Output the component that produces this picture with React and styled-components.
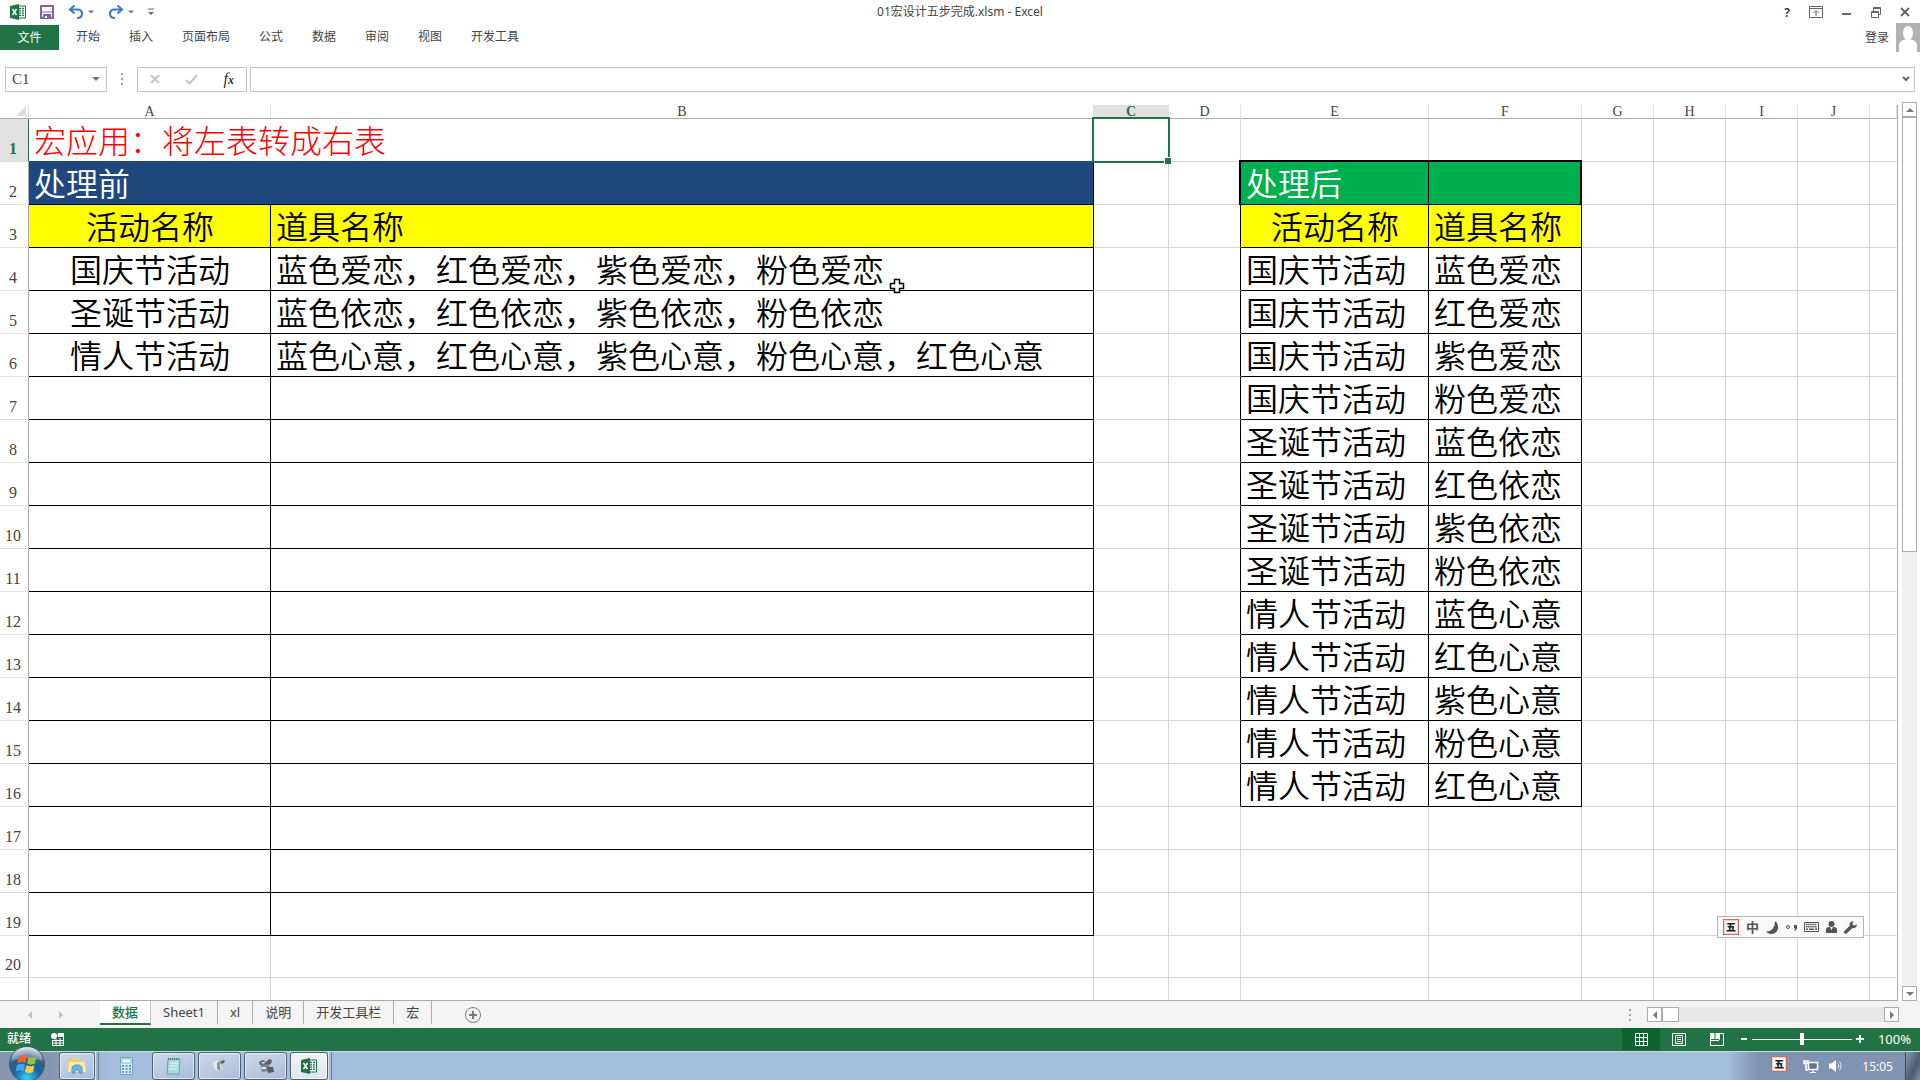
import { useState } from "react";
import styled, { createGlobalStyle } from "styled-components";

const UI_FONT = '"Noto Sans", "Noto Sans CJK SC", sans-serif';
const CELL_FONT = '"Noto Sans CJK SC", sans-serif';
const GREEN = "#217346";

const GlobalStyle = createGlobalStyle`
    * {
        box-sizing: border-box;
    }

    body {
        margin: 0;
        background-color: #FFF;
        color: #444;
        font-family: ${UI_FONT};
        font-size: 12px;
        overflow: hidden;
    }

    button, input {
        font: inherit;
        color: inherit;
        border: none;
        background: none;
        padding: 0;
        margin: 0;
    }

    svg {
        display: block;
    }
`

const Window = styled.div`
    display: flex;
    flex-direction: column;
    height: 100vh;
`

/* title bar */

const TitleBar = styled.header`
    display: grid;
    grid-template-columns: 1fr auto 1fr;
    align-items: center;
    height: 24px;
    padding: 0 10px;
`

const Tools = styled.div`
    display: flex;
    align-items: center;
    justify-content: ${({$end}) => $end ? "flex-end" : "flex-start"};
    gap: ${({$gap}) => $gap};
`

const IconButton = styled.button`
    display: flex;
    align-items: center;
    gap: 4px;
`

const DocTitle = styled.h1`
    margin: 0;
    font-size: 12px;
    font-weight: normal;
    line-height: 16px;
`

/* ribbon */

const Ribbon = styled.nav`
    display: flex;
    align-items: center;
    height: 26px;
    gap: 29px;
`

const FileTab = styled.button`
    width: 59px;
    height: 25px;
    margin-right: -12px;
    background-color: ${GREEN};
    color: #FFF;
`

const RibbonTab = styled.button`
    line-height: 24px;
`

const Login = styled.button`
    display: flex;
    align-items: center;
    gap: 7px;
    margin-left: auto;
`

/* formula bar */

const FormulaBar = styled.div`
    display: flex;
    align-items: center;
    height: 54px;
    padding: 4px 5px 0;
`

const NameBox = styled.label`
    display: flex;
    align-items: center;
    width: 102px;
    height: 25px;
    padding: 0 6px;
    border: 1px solid #C6C6C6;

    input {
        flex: 1;
        min-width: 0;
        font-family: "Liberation Serif", serif;
        font-size: 15px;
    }
`

const Grip = styled.span`
    display: flex;
    flex-direction: column;
    align-items: center;
    gap: 3px;
    width: ${({$width}) => $width};

    i {
        width: 2px;
        height: 2px;
        background-color: #A0A0A0;
    }
`

const FormulaTools = styled.div`
    display: flex;
    align-items: center;
    justify-content: space-between;
    width: 110px;
    height: 25px;
    padding: 0 12px;
    border: 1px solid #C6C6C6;
    margin-right: 3px;
`

const FxButton = styled.button`
    font-family: "Liberation Serif", serif;
    font-size: 16px;
    font-style: italic;
    line-height: 20px;
    color: #333;

    sub {
        font-size: 12px;
        font-weight: bold;
        vertical-align: baseline;
    }
`

const FormulaField = styled.label`
    display: flex;
    align-items: center;
    flex: 1;
    height: 25px;
    padding: 0 4px;
    border: 1px solid #C6C6C6;

    input {
        flex: 1;
    }
`

/* sheet */

const Workspace = styled.main`
    display: flex;
    flex: 1;
    min-height: 0;
    padding-top: 1px;
`

const SheetView = styled.div`
    flex: 1;
    min-width: 0;
    overflow: hidden;
    border-right: 1px solid #ABABAB;
    border-bottom: 1px solid #ABABAB;
`

const Sheet = styled.table`
    width: 100%;
    table-layout: fixed;
    border-collapse: separate;
    border-spacing: 0;
`

const ColHead = styled.th`
    height: 14px;
    padding: 0;
    border-right: 1px solid #E1E1E1;
    border-bottom: 1px solid ${({$active}) => $active ? GREEN : "#ABABAB"};
    background-color: ${({$active}) => $active ? "#E1E1E1" : "#FFF"};
    color: ${({$active}) => $active ? GREEN : "#444"};
    font-family: "Liberation Serif", serif;
    font-size: 14px;
    font-weight: ${({$active}) => $active ? "bold" : "normal"};
    line-height: 13px;
    vertical-align: bottom;
`

const Corner = styled(ColHead)`
    svg {
        margin-left: auto;
    }
`

const RowHead = styled.th`
    padding: 0 2px 3px 0;
    border-right: 1px solid ${({$active}) => $active ? GREEN : "#ABABAB"};
    border-bottom: 1px solid #E1E1E1;
    background-color: ${({$active}) => $active ? "#E1E1E1" : "#FFF"};
    color: ${({$active}) => $active ? GREEN : "#444"};
    font-family: "Liberation Serif", serif;
    font-size: 16px;
    font-weight: ${({$active}) => $active ? "bold" : "normal"};
    line-height: 18px;
    vertical-align: bottom;
`

const fills = {
    title: "background-color: #FFF; color: #F00; font-weight: 300;",
    navy: "background-color: #1F497D; color: #FFF;",
    green: "background-color: #00B050; color: #FFF;",
    yellow: "background-color: #FF0; color: #000;",
    plain: "color: #000;"
}

const Cell = styled.td`
    position: relative;
    height: ${({$height}) => $height}px;
    padding: 0 4px 2px 5px;
    border-right: 1px solid ${({$right}) => $right};
    border-bottom: 1px solid ${({$bottom}) => $bottom};
    font-family: ${CELL_FONT};
    font-size: 32px;
    font-weight: 350;
    line-height: 40px;
    text-align: ${({$center}) => $center ? "center" : "left"};
    white-space: nowrap;
    ${({$fill}) => fills[$fill]}
`

const Selection = styled.div`
    position: absolute;
    inset: -2px;
    border: 2px solid ${GREEN};
    z-index: 1;

    &::after {
        content: "";
        position: absolute;
        right: -3px;
        bottom: -3px;
        width: 6px;
        height: 6px;
        background-color: ${GREEN};
        border: 1px solid #FFF;
        border-width: 1px 0 0 1px;
    }
`

const ThickEdge = styled.span`
    position: absolute;
    inset: -2px -1px -1px -2px;
    border-top: 2px solid #000;
    border-${({$side}) => $side}: 2px solid #000;
`

const Pointer = styled.svg`
    position: absolute;
    left: 618px;
    bottom: -4px;
    z-index: 1;
`

/* scroll bars */

const VScroll = styled.div`
    display: flex;
    flex-direction: column;
    width: 15px;
    margin: -3px 3px 0 4px;
`

const HScroll = styled.div`
    display: flex;
    width: 252px;
    height: 15px;
    margin-right: 21px;
`

const ArrowButton = styled.button`
    display: flex;
    align-items: center;
    justify-content: center;
    width: 15px;
    height: 15px;
    border: 1px solid #ABABAB;
    background-color: #FFF;
    flex-shrink: 0;
`

const Track = styled.div`
    flex: 1;
    display: flex;
    flex-direction: ${({$vertical}) => $vertical ? "column" : "row"};
    background-color: ${({$vertical}) => $vertical ? "#F0F0F0" : "#E8E8E8"};
`

const Thumb = styled.div`
    flex-basis: ${({$size}) => $size};
    border: 1px solid #ABABAB;
    background-color: #FFF;
`

/* sheet tabs */

const TabBar = styled.div`
    display: flex;
    align-items: center;
    height: 27px;
    background-color: #F4F4F4;
`

const TabArrows = styled.div`
    display: flex;
    align-items: center;
    gap: 23px;
    width: 100px;
    padding-left: 26px;
`

const SheetTab = styled.button`
    align-self: flex-start;
    height: 24px;
    padding: 0 12px;
    font-size: 13px;
    line-height: 22px;
    color: ${({$active}) => $active ? GREEN : "#444"};
    background-color: ${({$active}) => $active ? "#FFF" : "transparent"};
    border-bottom: 2px solid ${({$active}) => $active ? GREEN : "transparent"};
    border-right: 1px solid ${({$active}) => $active ? "#C6C6C6" : "#ABABAB"};
    font-weight: ${({$active}) => $active ? "500" : "normal"};
`

const AddTab = styled.button`
    margin-left: 33px;
`

const Push = styled.div`
    margin-left: auto;
`

/* status bar */

const StatusBar = styled.footer`
    display: flex;
    align-items: center;
    height: 23px;
    padding: 0 9px 1px 7px;
    background-color: ${GREEN};
    color: #FFF;
    line-height: 16px;
`

const StatusText = styled.span`
    font-weight: 500;
    margin-right: 20px;
`

const ViewButton = styled.button`
    display: flex;
    align-items: center;
    justify-content: center;
    width: 38px;
    height: 22px;
    background-color: ${({$active}) => $active ? "#0F6331" : "transparent"};
`

const Zoom = styled.div`
    display: flex;
    align-items: center;
    gap: 4px;
    margin-left: 4px;

    input {
        appearance: none;
        width: 100px;
        height: 12px;
        background: linear-gradient(#FFF, #FFF) center / 100% 1px no-repeat;
    }

    input::-webkit-slider-thumb {
        appearance: none;
        width: 4px;
        height: 12px;
        background-color: #FFF;
    }
`

const ZoomValue = styled.button`
    width: 47px;
    font-size: 13px;
    text-align: right;
`

/* task bar */

const TaskBar = styled.div`
    display: flex;
    align-items: stretch;
    height: 29px;
    background: linear-gradient(90deg, #8496B0 0, #8496B0 50px, #A6BEDD 110px, #A6BEDD calc(100% - 192px), #8094B1 calc(100% - 162px));
    border-top: 1px solid #C9D6E6;
`

const StartButton = styled.button`
    position: relative;
    width: 59px;

    svg {
        position: absolute;
        left: 8px;
        bottom: -3px;
    }
`

const TaskButton = styled.button`
    display: flex;
    align-items: center;
    justify-content: center;
    width: ${({$width}) => $width};
    margin-right: 3px;
    border: 1px solid ${({$flat}) => $flat ? "transparent" : "#4F5E74"};
    border-radius: 3px;
    box-shadow: ${({$flat}) => $flat ? "none" : "inset 0 0 0 1px rgba(255, 255, 255, 0.6)"};
    background: ${({$flat, $active}) => $flat ? "none" : $active
        ? "linear-gradient(#EEF3F9, #DCE6F1)"
        : "linear-gradient(160deg, #CDD9EA, #A9BCD8)"};
`

const StackEdge = styled.span`
    width: 4px;
    margin-left: -3px;
    margin-right: ${({$after}) => $after};
    border-right: 1px solid #6C7D96;
    border-left: 1px solid #DCE6F1;
`

const Tray = styled.div`
    display: flex;
    align-items: center;
    margin-left: auto;
    color: #FFF;
`

const Clock = styled.time`
    margin: 0 12px 0 20px;
    font-size: 12px;
`

const ShowDesktop = styled.button`
    align-self: stretch;
    width: 15px;
    border-left: 1px solid #3C4A5E;
    background: linear-gradient(115deg, #8A9BB2, #4B5B70 60%, #8091A8);
`

/* input method bar */

const ImeBar = styled.div`
    position: fixed;
    right: 56px;
    bottom: 142px;
    display: flex;
    align-items: center;
    justify-content: space-between;
    width: 147px;
    height: 22px;
    padding: 0 6px 0 5px;
    border: 1px solid #B5B5B5;
    background-color: #FAFAFA;
    color: #555;
    z-index: 2;
`

const ImeMode = styled.button`
    font-size: 13px;
    font-weight: bold;
    line-height: 16px;
`

const Wubi = styled.button`
    width: 16px;
    height: 16px;
    border: 1px solid #D06A60;
    outline: 1px solid #F3D0CC;
    outline-offset: -2px;
    background-color: #FFF;
    color: #222;
    font-size: 10px;
    font-weight: 900;
    line-height: 12px;
`

const TrayWubi = styled(Wubi)`
    margin-right: 7px;
    margin-bottom: 4px;
`

function Triangle({dir = "down", size = 4, color = "#777"}){
    const turn = {down: 0, left: 90, up: 180, right: 270}[dir]
    return(
        <svg width={size * 2} height={size * 2} viewBox="0 0 8 8">
            <path d="M0 2h8L4 6z" fill={color} transform={`rotate(${turn} 4 4)`}/>
        </svg>
    )
}

function ExcelIcon({size = 16}){
    return(
        <svg width={size} height={size} viewBox="0 0 16 16">
            <path d="M8 2h7.5v12H8z" fill="#FFF" stroke="#217346"/>
            <path d="M9 4.5h2M12 4.5h2M9 6.8h2M12 6.8h2M9 9.1h2M12 9.1h2M9 11.4h2M12 11.4h2" stroke="#217346" strokeWidth="1.3"/>
            <path d="M0 2l9-2v16l-9-2z" fill="#217346"/>
            <path d="M2.5 5l4 6M6.5 5l-4 6" stroke="#FFF" strokeWidth="1.5"/>
        </svg>
    )
}

function SaveIcon(){
    return(
        <svg width="14" height="14" viewBox="0 0 14 14">
            <path d="M1 1h12v12H1z" fill="#FFF" stroke="#8660A8" strokeWidth="2"/>
            <path d="M1 7h12" stroke="#8660A8"/>
            <path d="M3 9h8v4H3z" fill="#8660A8"/>
            <path d="M5 11h2v2H5z" fill="#FFF"/>
        </svg>
    )
}

function UndoIcon({flip}){
    return(
        <svg width="16" height="16" viewBox="0 0 16 16">
            <g transform={flip ? "matrix(-1 0 0 1 16 0)" : undefined} fill="none" stroke="#3E7DBB" strokeWidth="2.2">
                <path d="M6.500 1.500L2 5.500l4.500 4"/>
                <path d="M2.500 5.500H9c3 0 5 1.500 5 4.200 0 2.600-2 4.300-5 4.300"/>
            </g>
        </svg>
    )
}

function CustomizeIcon(){
    return(
        <svg width="6" height="8" viewBox="0 0 6 8">
            <path d="M0 1h6" stroke="#666"/>
            <path d="M0 4h6L3 7z" fill="#666"/>
        </svg>
    )
}

function RibbonIcon(){
    return(
        <svg width="14" height="12" viewBox="0 0 14 12" fill="none" stroke="#666">
            <path d="M.5.5h13v11H.5zM.5 2.500h13M7 10V5M4.500 7L7 4.500 9.500 7"/>
        </svg>
    )
}

function MinimizeIcon(){
    return(
        <svg width="10" height="12" viewBox="0 0 10 12">
            <path d="M0 8h9" stroke="#666" strokeWidth="2"/>
        </svg>
    )
}

function RestoreIcon(){
    return(
        <svg width="10" height="11" viewBox="0 0 10 11" fill="none" stroke="#666">
            <path d="M.5 4.500h7v6h-7zM.5 5.500h7M2.500 4V.5h7v7H8M2.500 1.500h7"/>
        </svg>
    )
}

function CloseIcon({color = "#666", size = 10}){
    return(
        <svg width={size} height={size} viewBox="0 0 10 10">
            <path d="M1 1l8 8M9 1L1 9" stroke={color} strokeWidth="2"/>
        </svg>
    )
}

function CheckIcon(){
    return(
        <svg width="13" height="11" viewBox="0 0 13 11">
            <path d="M1 6l3.500 3.500L12 1" fill="none" stroke="#C4C4C4" strokeWidth="2"/>
        </svg>
    )
}

function AvatarIcon(){
    return(
        <svg width="24" height="29" viewBox="0 0 24 29">
            <path d="M0 0h24v29H0z" fill="#B2B2B2"/>
            <ellipse cx="12" cy="10" rx="5" ry="7" fill="#FFF"/>
            <path d="M3 29v-7c0-3 3-5 6-5.500h6c3 .5 6 2.500 6 5.500v7z" fill="#FFF"/>
        </svg>
    )
}

function MacroIcon(){
    return(
        <svg width="13" height="13" viewBox="0 0 13 13" fill="none" stroke="#FFF">
            <circle cx="3" cy="3" r="3" fill="#FFF" stroke="none"/>
            <path d="M7 .5h5.500v3H7z" fill="#FFF"/>
            <path d="M1.500 7v5.500h11V4M1.500 7.500h11M1.500 10h11M5 6v6M9 5v7"/>
        </svg>
    )
}

function GridIcon(){
    return(
        <svg width="13" height="13" viewBox="0 0 13 13" fill="none" stroke="#FFF">
            <path d="M.5.5h12v12H.5zM4.500 0v13M8.500 0v13M0 4.500h13M0 8.500h13"/>
        </svg>
    )
}

function PageIcon(){
    return(
        <svg width="14" height="13" viewBox="0 0 14 13" fill="none" stroke="#FFF">
            <path d="M.5.5h13v12H.5zM3.500 2.500h7v8h-7zM5 4.500h4M5 6.500h4M5 8.500h4"/>
        </svg>
    )
}

function BreakIcon(){
    return(
        <svg width="14" height="13" viewBox="0 0 14 13" fill="none" stroke="#FFF">
            <path d="M.5 0v12.500h13V.5H10M9.500 0v7M0 7.500h9"/>
            <path d="M1 0h3.500v6H1zM5.500 0H9v6H5.500z" fill="#FFF" stroke="none"/>
        </svg>
    )
}

function SignIcon({plus}){
    return(
        <svg width="8" height="8" viewBox="0 0 8 8" stroke="#FFF" strokeWidth="2">
            <path d={plus ? "M0 4h8M4 0v8" : "M1 4h6"}/>
        </svg>
    )
}

function AddIcon(){
    return(
        <svg width="16" height="16" viewBox="0 0 16 16" fill="none" stroke="#777">
            <circle cx="8" cy="8" r="7.500"/>
            <path d="M4 8h8M8 4v8" strokeWidth="2"/>
        </svg>
    )
}

function WindowsOrb(){
    return(
        <svg width="38" height="38" viewBox="0 0 38 38">
            <defs>
                <radialGradient id="orb" cx="50%" cy="90%" r="85%">
                    <stop offset="0" stopColor="#35D3F5"/>
                    <stop offset=".45" stopColor="#14649F"/>
                    <stop offset=".75" stopColor="#3A5D85"/>
                    <stop offset="1" stopColor="#C5D3E2"/>
                </radialGradient>
            </defs>
            <circle cx="19" cy="19" r="17.500" fill="url(#orb)" stroke="#42566F"/>
            <path d="M4 16a15 14 0 0 1 30 0c-9-4-21-4-30 0z" fill="#FFF" opacity=".3"/>
            <path d="M11 12c3-2 5-2 8-.5L17.500 18c-3-1.500-5-1.300-8 .3z" fill="#F0602B"/>
            <path d="M20.500 12c3 1.500 5 1.500 8-.3L27 18.500c-3 1.500-5 1.500-8 0z" fill="#8DC63F"/>
            <path d="M9 20c3-1.600 5-1.600 8-.2l-1.500 6.500c-3-1.500-5-1.300-8 .3z" fill="#3FA9F5"/>
            <path d="M18.500 20.200c3 1.500 5 1.500 8 0L25 27c-3 1.500-5 1.300-8-.3z" fill="#FFCB2E"/>
        </svg>
    )
}

function FolderIcon(){
    return(
        <svg width="20" height="18" viewBox="0 0 20 18">
            <path d="M1 3l2-2h5l2 2h7v12H1z" fill="#E8CF74"/>
            <path d="M2 5h16l1 10H1z" fill="#F7E9A6"/>
            <path d="M5 16v-4c0-3 2-4 5-4s5 1 5 4v4h-3v-3H8v3z" fill="#6DB8E8" stroke="#4B95C9"/>
        </svg>
    )
}

function CalcIcon(){
    return(
        <svg width="13" height="18" viewBox="0 0 13 18">
            <path d="M.5.5h12v17H.5z" fill="#D8ECF8" stroke="#6FA3C7"/>
            <path d="M2 2h9v4H2z" fill="#FFF" stroke="#8AB7D6"/>
            <path d="M2 9h9M2 12h9M2 15h9" stroke="#5F9CC5" strokeWidth="2" strokeDasharray="2 1.500"/>
        </svg>
    )
}

function NotepadIcon(){
    return(
        <svg width="15" height="18" viewBox="0 0 15 18">
            <path d="M2 2h12l-1 15H1z" fill="#A9DAE2" stroke="#6DA4B0"/>
            <path d="M2 2h12" stroke="#56717A" strokeWidth="2" strokeDasharray="1 1"/>
            <path d="M4 6h8M4 9h8M3 12h8" stroke="#E6F7FA"/>
        </svg>
    )
}

function CameraIcon(){
    return(
        <svg width="16" height="16" viewBox="0 0 16 16">
            <path d="M1 4l6-1 2 2-1 8-5-1z" fill="#E8EBEF"/>
            <path d="M5 5l3-2v10l-3-2z" fill="#8A919B"/>
            <path d="M8 4c2-2 4-2 5-1l-1 2-3 1z" fill="#5C636D"/>
            <path d="M9 8l3 0 1 3-3 1z" fill="#C9CED5"/>
        </svg>
    )
}

function RecorderIcon(){
    return(
        <svg width="18" height="16" viewBox="0 0 18 16">
            <path d="M2 4l4-2 3 2 3-3 3 1-1 4-5 2-6-1z" fill="#5D636B"/>
            <path d="M4 7l8-1 1 7-8 1z" fill="#7D838B"/>
            <path d="M10 9l6 0 1 5-6 1z" fill="#575D65"/>
            <path d="M5 4l3 0 0 1-3 1zM5 9l4 0 0 2-4 0z" fill="#E1E5EA"/>
        </svg>
    )
}

function NetworkIcon(){
    return(
        <svg width="16" height="15" viewBox="0 0 16 15" fill="none" stroke="#FFF">
            <path d="M5.500 3.500h9v7h-9z" fill="#5F748F" strokeWidth="1.500"/>
            <path d="M10 11v2M7 13.500h6"/>
            <path d="M1 1v3.500h4V1M3 1v3M3 5v6h2" strokeWidth="1.500"/>
        </svg>
    )
}

function SpeakerIcon(){
    return(
        <svg width="14" height="14" viewBox="0 0 14 14">
            <path d="M1 4.500h2.500L8 1v12L3.500 9.500H1z" fill="#FFF"/>
            <path d="M10 4.500c1 1.500 1 3.500 0 5M11.500 2.500c2 3 2 6 0 9" fill="none" stroke="#DCE4EE"/>
        </svg>
    )
}

function MoonIcon(){
    return(
        <svg width="13" height="13" viewBox="0 0 13 13">
            <path d="M9 0c5 4 4 12-3.500 13C3 13 1 12 0 10.500 5 11 9 7 9 0z" fill="#555"/>
        </svg>
    )
}

function PunctIcon(){
    return(
        <svg width="11" height="9" viewBox="0 0 11 9">
            <circle cx="2" cy="4" r="1.500" fill="none" stroke="#555"/>
            <path d="M8 2h3v2.500C11 6.500 9.500 8 8 8.500 8.800 7.500 9 6.500 9 5H8z" fill="#555"/>
        </svg>
    )
}

function KeyboardIcon(){
    return(
        <svg width="15" height="10" viewBox="0 0 15 10">
            <path d="M.5.5h14v9H.5z" fill="#FFF" stroke="#555"/>
            <path d="M2 2.500h11M2 4.800h11" stroke="#555" strokeDasharray="1.500 .6" strokeWidth="1.400"/>
            <path d="M2 7.300h2M5 7.300h5M11 7.300h2" stroke="#555" strokeWidth="1.400"/>
        </svg>
    )
}

function PersonIcon(){
    return(
        <svg width="11" height="12" viewBox="0 0 11 12" fill="#555">
            <circle cx="5.500" cy="3" r="3"/>
            <path d="M0 12V8.500C0 6.500 2 6 4 6l1.500 3L7 6c2 0 4 .5 4 2.500V12z"/>
        </svg>
    )
}

function WrenchIcon(){
    return(
        <svg width="13" height="13" viewBox="0 0 13 13">
            <path d="M12.800 3.200l-2.600 1.600-2-2L9.800.2C7 -.3 5 2 5.700 4.700L.4 10c-.7.700-.5 1.700.1 2.300.7.700 1.700.7 2.400 0l5.300-5.100c2.900.5 5-1.400 4.600-4z" fill="#555"/>
        </svg>
    )
}

const ribbonTabs = ["开始", "插入", "页面布局", "公式", "数据", "审阅", "视图", "开发工具"]
const sheetTabs = ["数据", "Sheet1", "xl", "说明", "开发工具栏", "宏"]

const columns = [
    ["A", 242], ["B", 823], ["C", 75], ["D", 72], ["E", 188], ["F", 153],
    ["G", 72], ["H", 72], ["I", 72], ["J", 72], ["", null]
]

const before = {
    3: ["活动名称", "道具名称"],
    4: ["国庆节活动", "蓝色爱恋，红色爱恋，紫色爱恋，粉色爱恋"],
    5: ["圣诞节活动", "蓝色依恋，红色依恋，紫色依恋，粉色依恋"],
    6: ["情人节活动", "蓝色心意，红色心意，紫色心意，粉色心意，红色心意"]
}

const after = {
    2: ["处理后", ""],
    3: ["活动名称", "道具名称"],
    4: ["国庆节活动", "蓝色爱恋"],
    5: ["国庆节活动", "红色爱恋"],
    6: ["国庆节活动", "紫色爱恋"],
    7: ["国庆节活动", "粉色爱恋"],
    8: ["圣诞节活动", "蓝色依恋"],
    9: ["圣诞节活动", "红色依恋"],
    10: ["圣诞节活动", "紫色依恋"],
    11: ["圣诞节活动", "粉色依恋"],
    12: ["情人节活动", "蓝色心意"],
    13: ["情人节活动", "红色心意"],
    14: ["情人节活动", "紫色心意"],
    15: ["情人节活动", "粉色心意"],
    16: ["情人节活动", "红色心意"]
}

const LINE = "#D4D4D4"
const BLACK = "#000"

function SheetRow({row}){
    const height = row === 20 ? 42 : 43
    const inBefore = row > 1 && row < 20
    const left = before[row] || ["", ""]
    const right = after[row]
    const fill = row === 3 ? "yellow" : "plain"
    const rightFill = row === 2 ? "green" : fill
    const beforeLine = inBefore ? BLACK : LINE

    return(
        <tr>
            <RowHead scope="row" $active={row === 1}>{row < 21 ? row : ""}</RowHead>

            {row < 3 ? (
                <Cell
                    colSpan={2}
                    $height={height}
                    $fill={row === 1 ? "title" : "navy"}
                    $right={row === 1 ? LINE : BLACK}
                    $bottom={row === 1 ? "#1F497D" : BLACK}
                >
                    {row === 1 ? "宏应用：将左表转成右表" : "处理前"}
                </Cell>
            ) : (
                <>
                    <Cell $height={height} $fill={fill} $center $right={beforeLine} $bottom={beforeLine}>{left[0]}</Cell>
                    <Cell $height={height} $fill={fill} $right={beforeLine} $bottom={beforeLine}>
                        {left[1]}
                        {row === 4 && (
                            <Pointer width="16" height="16" viewBox="0 0 16 16">
                                <path d="M5.500 1.500h5v4h4v5h-4v4h-5v-4h-4v-5h4z" fill="#FFF" stroke="#000" strokeWidth="1.500"/>
                            </Pointer>
                        )}
                    </Cell>
                </>
            )}

            <Cell $height={height} $right={LINE} $bottom={LINE}>{row === 1 && <Selection/>}</Cell>
            <Cell $height={height} $right={right ? BLACK : LINE} $bottom={LINE}/>

            <Cell
                $height={height}
                $fill={right ? rightFill : "plain"}
                $center={row === 3}
                $right={right ? BLACK : LINE}
                $bottom={right || row === 1 ? BLACK : LINE}
            >
                {right && right[0]}
                {row === 2 && <ThickEdge $side="left"/>}
            </Cell>
            <Cell
                $height={height}
                $fill={right ? rightFill : "plain"}
                $right={right ? BLACK : LINE}
                $bottom={right || row === 1 ? BLACK : LINE}
            >
                {right && right[1]}
                {row === 2 && <ThickEdge $side="right"/>}
            </Cell>

            {[0, 1, 2, 3, 4].map((i) => (
                <Cell key={i} $height={height} $right={i === 4 ? "transparent" : LINE} $bottom={LINE}/>
            ))}
        </tr>
    )
}

function Dots({width}){
    return(
        <Grip $width={width} aria-hidden="true"><i/><i/><i/></Grip>
    )
}

function App(){
    const [zoom, setZoom] = useState(100)
    const [formula, setFormula] = useState("")
    const [cellName, setCellName] = useState("C1")

    return(
        <Window>
            <GlobalStyle/>

            <TitleBar>
                <Tools $gap="14px">
                    <ExcelIcon/>
                    <IconButton aria-label="保存"><SaveIcon/></IconButton>
                    <IconButton aria-label="撤消"><UndoIcon/><Triangle size={3}/></IconButton>
                    <IconButton aria-label="恢复"><UndoIcon flip/><Triangle size={3}/></IconButton>
                    <IconButton aria-label="自定义"><CustomizeIcon/></IconButton>
                </Tools>
                <DocTitle>01宏设计五步完成.xlsm - Excel</DocTitle>
                <Tools $end $gap="19px">
                    <IconButton aria-label="帮助"><b>?</b></IconButton>
                    <IconButton aria-label="功能区"><RibbonIcon/></IconButton>
                    <IconButton aria-label="最小化"><MinimizeIcon/></IconButton>
                    <IconButton aria-label="还原"><RestoreIcon/></IconButton>
                    <IconButton aria-label="关闭"><CloseIcon/></IconButton>
                </Tools>
            </TitleBar>

            <Ribbon>
                <FileTab>文件</FileTab>
                {ribbonTabs.map((tab) => <RibbonTab key={tab}>{tab}</RibbonTab>)}
                <Login>登录<AvatarIcon/></Login>
            </Ribbon>

            <FormulaBar>
                <NameBox>
                    <input aria-label="名称框" value={cellName} onChange={(e) => setCellName(e.target.value)}/>
                    <Triangle/>
                </NameBox>
                <Dots width="30px"/>
                <FormulaTools>
                    <IconButton aria-label="取消"><CloseIcon color="#C4C4C4"/></IconButton>
                    <IconButton aria-label="输入"><CheckIcon/></IconButton>
                    <FxButton aria-label="插入函数">f<sub>x</sub></FxButton>
                </FormulaTools>
                <FormulaField>
                    <input aria-label="编辑栏" value={formula} onChange={(e) => setFormula(e.target.value)}/>
                    <svg width="8" height="6" viewBox="0 0 8 6">
                        <path d="M1 1l3 3 3-3" fill="none" stroke="#666" strokeWidth="2"/>
                    </svg>
                </FormulaField>
            </FormulaBar>

            <Workspace>
                <SheetView>
                    <Sheet>
                        <colgroup>
                            <col width="29"/>
                            {columns.map(([name, width]) => <col key={name} width={width || undefined}/>)}
                        </colgroup>
                        <thead>
                            <tr>
                                <Corner>
                                    <svg width="12" height="12" viewBox="0 0 12 12">
                                        <path d="M10 0v10H0z" fill="#DDD"/>
                                    </svg>
                                </Corner>
                                {columns.map(([name]) => (
                                    <ColHead key={name} scope="col" $active={name === "C"}>{name}</ColHead>
                                ))}
                            </tr>
                        </thead>
                        <tbody>
                            {Array.from({length: 21}, (_, i) => <SheetRow key={i} row={i + 1}/>)}
                        </tbody>
                    </Sheet>
                </SheetView>
                <VScroll>
                    <ArrowButton aria-label="向上"><Triangle dir="up"/></ArrowButton>
                    <Track $vertical><Thumb $size="50%"/></Track>
                    <ArrowButton aria-label="向下"><Triangle/></ArrowButton>
                </VScroll>
            </Workspace>

            <TabBar>
                <TabArrows>
                    <Triangle dir="left" color="#C0C0C0"/>
                    <Triangle dir="right" color="#C0C0C0"/>
                </TabArrows>
                {sheetTabs.map((tab, i) => <SheetTab key={tab} $active={i === 0}>{tab}</SheetTab>)}
                <AddTab aria-label="新工作表"><AddIcon/></AddTab>
                <Push><Dots width="34px"/></Push>
                <HScroll>
                    <ArrowButton aria-label="向左"><Triangle dir="left"/></ArrowButton>
                    <Track><Thumb $size="17px"/></Track>
                    <ArrowButton aria-label="向右"><Triangle dir="right"/></ArrowButton>
                </HScroll>
            </TabBar>

            <StatusBar>
                <StatusText>就绪</StatusText>
                <MacroIcon/>
                <Push/>
                <ViewButton aria-label="普通" $active><GridIcon/></ViewButton>
                <ViewButton aria-label="页面布局"><PageIcon/></ViewButton>
                <ViewButton aria-label="分页预览"><BreakIcon/></ViewButton>
                <Zoom>
                    <IconButton aria-label="缩小"><SignIcon/></IconButton>
                    <input
                        type="range"
                        aria-label="显示比例"
                        min="0"
                        max="200"
                        value={zoom}
                        onChange={(e) => setZoom(Number(e.target.value))}
                    />
                    <IconButton aria-label="放大"><SignIcon plus/></IconButton>
                </Zoom>
                <ZoomValue>{zoom}%</ZoomValue>
            </StatusBar>

            <TaskBar>
                <StartButton aria-label="开始菜单"><WindowsOrb/></StartButton>
                <TaskButton aria-label="资源管理器" $width="36px"><FolderIcon/></TaskButton>
                <StackEdge $after="4px"/>
                <TaskButton aria-label="计算器" $flat $width="46px"><CalcIcon/></TaskButton>
                <TaskButton aria-label="记事本" $width="43px"><NotepadIcon/></TaskButton>
                <TaskButton aria-label="摄像" $width="43px"><CameraIcon/></TaskButton>
                <TaskButton aria-label="录像" $width="43px"><RecorderIcon/></TaskButton>
                <TaskButton aria-label="Excel" $active $width="38px"><ExcelIcon/></TaskButton>
                <StackEdge $after="0"/>
                <Tray>
                    <Tools $gap="9px">
                        <TrayWubi>五</TrayWubi>
                        <NetworkIcon/>
                        <SpeakerIcon/>
                    </Tools>
                    <Clock>15:05</Clock>
                    <ShowDesktop aria-label="显示桌面"/>
                </Tray>
            </TaskBar>

            <ImeBar>
                <Wubi>五</Wubi>
                <ImeMode>中</ImeMode>
                <MoonIcon/>
                <PunctIcon/>
                <KeyboardIcon/>
                <PersonIcon/>
                <WrenchIcon/>
            </ImeBar>
        </Window>
    )
}

export default App
